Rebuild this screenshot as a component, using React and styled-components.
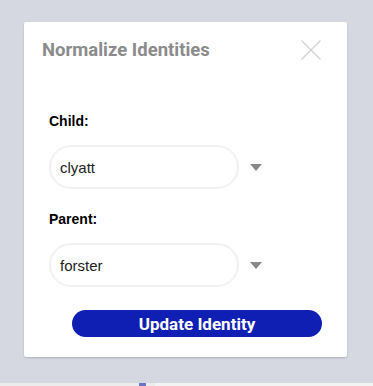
import styled, { createGlobalStyle } from "styled-components";

const GlobalStyle = createGlobalStyle`
  html, body {
    margin: 0;
    padding: 0;
    background: #d5d8e0;
  }
  * {
    box-sizing: border-box;
  }
`;

const Page = styled.div`
  width: 373px;
  height: 386px;
  display: flex;
  flex-direction: column;
  overflow: hidden;
`;

const Backdrop = styled.div`
  flex: 1;
  padding: 22px 26px 0 24px;
`;

const Modal = styled.div`
  width: 323px;
  height: 335px;
  background: #fff;
  border-radius: 2px;
  box-shadow: 0 1px 2px rgba(0, 0, 0, 0.18);
  padding: 16px 25px 20px 18px;
  display: flex;
  flex-direction: column;
`;

const Header = styled.div`
  height: 24px;
  display: flex;
  align-items: center;
  justify-content: space-between;
`;

const Title = styled.h2`
  margin: 0;
  font-family: Roboto, "Liberation Sans", sans-serif;
  font-weight: 700;
  font-size: 18.5px;
  color: #8b8b8b;
`;

const CloseButton = styled.button`
  width: 20px;
  height: 20px;
  padding: 0;
  margin-right: 1px;
  border: none;
  background: transparent;
  cursor: pointer;
  display: flex;

  svg {
    width: 20px;
    height: 20px;
  }
`;

const Form = styled.form`
  margin-top: 51px;
  padding-left: 7px;
  display: flex;
  flex-direction: column;
`;

const Label = styled.label`
  font-family: "Liberation Sans", Arial, sans-serif;
  font-weight: 700;
  font-size: 14px;
  line-height: 16px;
  color: #000;
  margin-top: ${p => (p.first ? "0" : "22px")};
`;

const SelectRow = styled.div`
  margin-top: 16px;
  display: flex;
  align-items: center;
  gap: 11px;
`;

const Field = styled.div`
  width: 190px;
  height: 44px;
  border: 2px solid #f1f1f1;
  border-radius: 22px;
  padding-left: 9px;
  display: flex;
  align-items: center;
  font-family: "Liberation Sans", Arial, sans-serif;
  font-size: 15px;
  color: #222;
`;

const Caret = styled.span`
  width: 0;
  height: 0;
  border-left: 6px solid transparent;
  border-right: 6px solid transparent;
  border-top: 7px solid #888;
`;

const SubmitButton = styled.button`
  margin-top: 23px;
  align-self: flex-end;
  width: 250px;
  height: 27px;
  border: none;
  border-radius: 14px;
  background: #0f1fb3;
  color: #fff;
  font-family: Roboto, "Liberation Sans", sans-serif;
  font-weight: 700;
  font-size: 17px;
  cursor: pointer;
`;

const Footer = styled.div`
  height: 3px;
  background: #ececec;
  display: flex;
`;

const FooterMark = styled.span`
  margin-left: 139px;
  width: 7px;
  background: #6c72c4;
`;

const FooterRest = styled.span`
  margin-left: 9px;
  flex: 1;
  background: #f3f3f3;
`;

function Select({ value }) {
  return (
    <SelectRow>
      <Field>{value}</Field>
      <Caret />
    </SelectRow>
  );
}

export default function App() {
  return (
    <>
      <GlobalStyle />
      <Page>
        <Backdrop>
          <Modal>
            <Header>
              <Title>Normalize Identities</Title>
              <CloseButton type="button" aria-label="Close">
                <svg viewBox="0 0 20 20" fill="none" stroke="#d2d2d2" strokeWidth="1.3">
                  <path d="M0.5 0.5 L19.5 19.5 M19.5 0.5 L0.5 19.5" />
                </svg>
              </CloseButton>
            </Header>
            <Form onSubmit={e => e.preventDefault()}>
              <Label first>Child:</Label>
              <Select value="clyatt" />
              <Label>Parent:</Label>
              <Select value="forster" />
              <SubmitButton type="submit">Update Identity</SubmitButton>
            </Form>
          </Modal>
        </Backdrop>
        <Footer>
          <FooterMark />
          <FooterRest />
        </Footer>
      </Page>
    </>
  );
}
